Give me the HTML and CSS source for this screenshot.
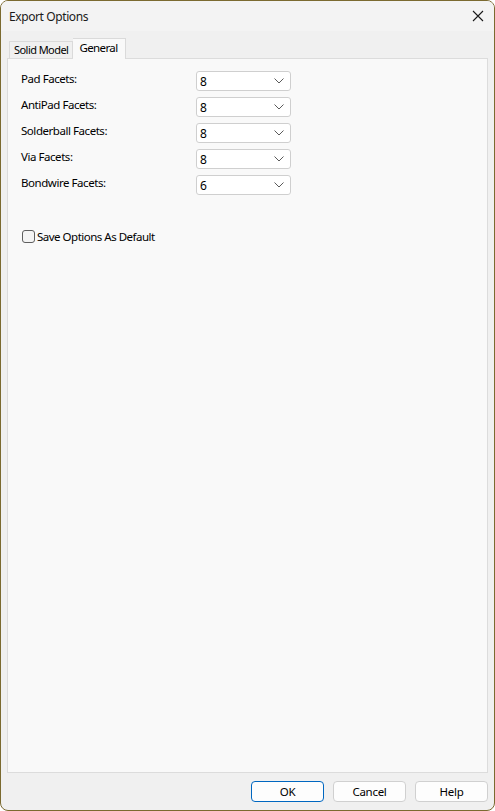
FILE: index.html
```html
<!DOCTYPE html>
<html>
<head>
<meta charset="utf-8">
<link rel="stylesheet" href="styles.css">
</head>
<body>
<div class="window">
  <div class="titlebar">
    <span class="title">Export Options</span>
    <span class="close">
      <svg width="12" height="12" viewBox="0 0 12 12"><path d="M1 1 L11 11 M11 1 L1 11" stroke="#1a1a1a" stroke-width="1.1" fill="none"/></svg>
    </span>
  </div>
  <div class="content">
    <div class="tabs">
      <div class="tab">Solid Model</div>
      <div class="tab active">General</div>
    </div>
    <div class="panel">
      <div class="form">
        <div class="row"><span class="label">Pad Facets:</span><div class="select"><span>8</span><svg class="chev" width="10" height="6" viewBox="0 0 10 6"><path d="M0.5 0.5 L5 5 L9.5 0.5" stroke="#5a5a5a" stroke-width="1" fill="none"/></svg></div></div>
        <div class="row"><span class="label">AntiPad Facets:</span><div class="select"><span>8</span><svg class="chev" width="10" height="6" viewBox="0 0 10 6"><path d="M0.5 0.5 L5 5 L9.5 0.5" stroke="#5a5a5a" stroke-width="1" fill="none"/></svg></div></div>
        <div class="row"><span class="label">Solderball Facets:</span><div class="select"><span>8</span><svg class="chev" width="10" height="6" viewBox="0 0 10 6"><path d="M0.5 0.5 L5 5 L9.5 0.5" stroke="#5a5a5a" stroke-width="1" fill="none"/></svg></div></div>
        <div class="row"><span class="label">Via Facets:</span><div class="select"><span>8</span><svg class="chev" width="10" height="6" viewBox="0 0 10 6"><path d="M0.5 0.5 L5 5 L9.5 0.5" stroke="#5a5a5a" stroke-width="1" fill="none"/></svg></div></div>
        <div class="row"><span class="label">Bondwire Facets:</span><div class="select"><span>6</span><svg class="chev" width="10" height="6" viewBox="0 0 10 6"><path d="M0.5 0.5 L5 5 L9.5 0.5" stroke="#5a5a5a" stroke-width="1" fill="none"/></svg></div></div>
      </div>
      <label class="check"><span class="box"></span><span>Save Options As Default</span></label>
    </div>
  </div>
  <div class="footer">
    <button class="btn primary">OK</button>
    <button class="btn">Cancel</button>
    <button class="btn">Help</button>
  </div>
</div>
</body>
</html>
```
FILE: styles.css
```css
html, body {
  margin: 0;
  padding: 0;
  background: #ffffff;
}
body {
  font-family: "Noto Sans", "Open Sans", sans-serif;
  font-size: 12px;
  color: #000;
}
.window {
  width: 495px;
  height: 811px;
  box-sizing: border-box;
  border: 1px solid #7b6a30;
  border-radius: 8px;
  background: #f0f0f0;
  display: flex;
  flex-direction: column;
  overflow: hidden;
}
.titlebar {
  height: 30px;
  flex: none;
  background: #f3f3f3;
  display: flex;
  align-items: center;
  justify-content: space-between;
  padding: 0 10px 0 8px;
}
.title {
  font-size: 12px;
  color: #1a1a1a;
  letter-spacing: -0.4px;
}
.close {
  display: flex;
  align-items: center;
  width: 12px;
  height: 12px;
}
.content {
  flex: 1;
  display: flex;
  flex-direction: column;
  padding: 7px 6px 0 6px;
  min-height: 0;
}
.tabs {
  display: flex;
  align-items: flex-end;
  height: 20px;
  padding-left: 2px;
  position: relative;
  z-index: 2;
}
.tab {
  height: 17px;
  box-sizing: border-box;
  border: 1px solid #dadada;
  border-bottom: none;
  background: #f0f0f0;
  padding: 0 4px 0 4px;
  line-height: 16px;
  font-size: 11px;
  color: #000;
  letter-spacing: -0.55px;
}
.tab.active {
  height: 21px;
  margin-bottom: -1px;
  background: #f9f9f9;
  border-left: none;
  padding: 0 7px 0 6px;
  line-height: 18px;
  font-size: 11.5px;
  letter-spacing: -0.6px;
}
.panel {
  flex: 1;
  background: #f9f9f9;
  border: 1px solid #dcdcdc;
  padding: 12px 13px;
  display: flex;
  flex-direction: column;
}
.form {
  display: flex;
  flex-direction: column;
  gap: 6px;
}
.row {
  display: flex;
  align-items: center;
  height: 20px;
}
.label {
  width: 175px;
  flex: none;
  font-size: 11.5px;
  letter-spacing: -0.45px;
  margin-top: -5px;
}
.select {
  width: 95px;
  height: 20px;
  box-sizing: border-box;
  border: 1px solid #cfcfcf;
  border-radius: 3px;
  background: #ffffff;
  display: flex;
  align-items: center;
  justify-content: space-between;
  padding: 0 6px 0 3px;
  font-size: 12px;
}
.chev {
  display: block;
}
.check {
  display: flex;
  align-items: center;
  margin-top: 34px;
  margin-left: 1px;
  gap: 2px;
  font-size: 11.5px;
  letter-spacing: -0.5px;
}
.box {
  width: 13px;
  height: 13px;
  box-sizing: border-box;
  border: 1px solid #5f5f5f;
  border-radius: 3px;
  background: #f4f4f4;
}
.footer {
  flex: none;
  display: flex;
  justify-content: flex-end;
  gap: 9px;
  padding: 8px 6px 8px 6px;
}
.btn {
  width: 73px;
  height: 21px;
  box-sizing: border-box;
  border: 1px solid #d0d0d0;
  border-radius: 4px;
  background: #fdfdfd;
  font-family: "Noto Sans", "Open Sans", sans-serif;
  font-size: 11.5px;
  color: #000;
  padding: 0;
  letter-spacing: -0.3px;
}
.btn.primary {
  border-color: #0067c0;
}
```
